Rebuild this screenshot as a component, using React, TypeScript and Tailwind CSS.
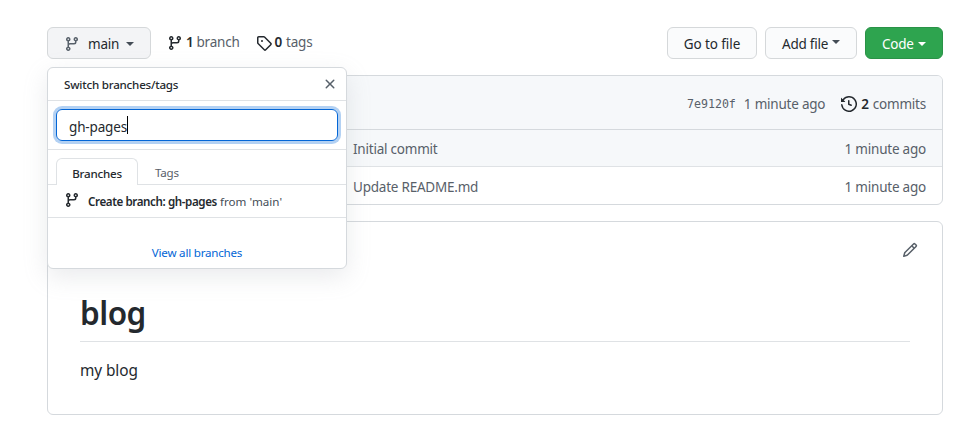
import type { ReactNode } from 'react';

const icons = {
  branch:
    'M11.75 2.5a.75.75 0 100 1.5.75.75 0 000-1.5zm-2.25.75a2.25 2.25 0 113 2.122V6A2.5 2.5 0 0110 8.5H6a1 1 0 00-1 1v1.128a2.251 2.251 0 11-1.5 0V5.372a2.25 2.25 0 111.5 0v1.836A2.492 2.492 0 016 7h4a1 1 0 001-1v-.628A2.25 2.25 0 019.5 3.25zM4.25 12a.75.75 0 100 1.5.75.75 0 000-1.5zM3.5 3.25a.75.75 0 111.5 0 .75.75 0 01-1.5 0z',
  tag: 'M2.5 7.775V2.75a.25.25 0 01.25-.25h5.025a.25.25 0 01.177.073l6.25 6.25a.25.25 0 010 .354l-5.025 5.025a.25.25 0 01-.354 0l-6.25-6.25a.25.25 0 01-.073-.177zm-1.5 0V2.75C1 1.784 1.784 1 2.75 1h5.025c.464 0 .91.184 1.238.513l6.25 6.25a1.75 1.75 0 010 2.474l-5.026 5.026a1.75 1.75 0 01-2.474 0l-6.25-6.25A1.75 1.75 0 011 7.775zM6 5a1 1 0 100 2 1 1 0 000-2z',
  history:
    'M1.643 3.143L.427 1.927A.25.25 0 000 2.104V5.75c0 .138.112.25.25.25h3.646a.25.25 0 00.177-.427L2.715 4.215a6.5 6.5 0 11-1.18 4.458.75.75 0 10-1.493.154 8.001 8.001 0 101.6-5.684zM7.75 4a.75.75 0 01.75.75v2.992l2.028.812a.75.75 0 01-.557 1.392l-2.5-1A.75.75 0 017 8.25v-3.5A.75.75 0 017.75 4z',
  x: 'M3.72 3.72a.75.75 0 011.06 0L8 6.94l3.22-3.22a.75.75 0 111.06 1.06L9.06 8l3.22 3.22a.75.75 0 11-1.06 1.06L8 9.06l-3.22 3.22a.75.75 0 01-1.06-1.06L6.94 8 3.72 4.78a.75.75 0 010-1.06z',
  pencil:
    'M11.013 1.427a1.75 1.75 0 012.474 0l1.086 1.086a1.75 1.75 0 010 2.474l-8.61 8.61c-.21.21-.47.364-.756.445l-3.251.93a.75.75 0 01-.927-.928l.929-3.25a1.75 1.75 0 01.445-.758l8.61-8.61zm1.414 1.06a.25.25 0 00-.354 0L10.811 3.75l1.439 1.44 1.263-1.263a.25.25 0 000-.354l-1.086-1.086zM11.189 6.25L9.75 4.81l-6.286 6.287a.25.25 0 00-.064.108l-.558 1.953 1.953-.558a.249.249 0 00.108-.064l6.286-6.286z',
};

function Icon({ name, className = '' }: { name: keyof typeof icons; className?: string }) {
  return (
    <svg viewBox="0 0 16 16" className={`size-4 shrink-0 fill-current ${className}`}>
      <path fillRule="evenodd" d={icons[name]} />
    </svg>
  );
}

function Caret({ className = '' }: { className?: string }) {
  return <span className={`h-0 w-0 border-x-4 border-t-4 border-x-transparent border-t-current ${className}`} />;
}

function Button({ className, children }: { className: string; children: ReactNode }) {
  return (
    <button className={`flex h-8 items-center rounded-md border pt-0.5 whitespace-nowrap ${className}`}>
      {children}
    </button>
  );
}

function Toolbar() {
  return (
    <div className="flex h-8 items-center">
      <div className="relative">
        <Button className="w-26 border-[#d5d8da] bg-[#f3f4f6] pl-4">
          <Icon name="branch" className="text-[#57606a]" />
          <span className="ml-2">main</span>
          <Caret className="ml-[7px] text-[#444d56]" />
        </Button>
        <BranchMenu />
      </div>
      <div className="ml-4 flex items-center text-[#586069]">
        <Icon name="branch" className="text-[#24292e]" />
        <b className="ml-[3px] pb-0.5 font-semibold text-[#24292e]">1</b>
        <span className="ml-[3px] pb-0.5">branch</span>
      </div>
      <div className="ml-4 flex items-center text-[#586069]">
        <Icon name="tag" className="text-[#24292e]" />
        <b className="ml-[3px] pb-0.5 font-semibold text-[#24292e]">0</b>
        <span className="ml-1 pb-0.5">tags</span>
      </div>
      <div className="ml-auto flex gap-2">
        <Button className="w-[90px] justify-center border-[#d5d8da] bg-[#fafbfc] tracking-[-0.1px]">Go to file</Button>
        <Button className="w-[92px] border-[#d5d8da] bg-[#fafbfc] pl-4">
          Add file
          <Caret className="mb-1 ml-1 text-[#444d56]" />
        </Button>
        <Button className="w-[78px] border-[#2a9247] bg-[#2ea44f] pl-4 text-white">
          Code
          <Caret className="ml-1" />
        </Button>
      </div>
    </div>
  );
}

function BranchMenu() {
  return (
    <div className="absolute top-10 left-0 z-10 flex h-[202px] w-[300px] flex-col rounded-md border border-[#d5d9dd] bg-white text-[11.6px] shadow-[0_8px_24px_rgba(149,157,165,0.2)]">
      <div className="flex h-[33px] items-center justify-between border-b border-[#dfe2e5] pr-2 pl-4">
        <span className="pt-0.5 font-medium">Switch branches/tags</span>
        <Icon name="x" className="text-[#57606a]" />
      </div>
      <div className="h-[49px] border-b border-[#dfe2e5] p-2">
        <div className="flex h-8 items-center rounded-md border border-[#0366d6] px-3 text-[13.5px] shadow-[0_0_0_3px_rgba(3,102,214,0.3)]">
          <span className="pt-[3px] tracking-[-0.15px]">gh-pages</span>
          <span className="h-[18px] w-px bg-black" />
        </div>
      </div>
      <div className="flex h-[35px] items-end border-b border-[#dfe2e5] pl-2">
        <div className="-mb-px flex h-[27px] w-[82px] items-center justify-center rounded-t-md border border-b-0 border-[#dfe2e5] bg-white pt-[3px] font-medium">
          Branches
        </div>
        <div className="flex h-[27px] items-center pt-1 pl-[17px] text-[#586069]">Tags</div>
      </div>
      <div className="flex h-[33px] items-center border-b border-[#dfe2e5] pl-4">
        <Icon name="branch" className="mb-[3px]" />
        <span className="ml-2 pt-0.5 font-semibold tracking-[-0.4px] whitespace-nowrap">Create branch: gh-pages</span>
        <span className="ml-[3px] pt-0.5 tracking-[0.05px] whitespace-nowrap text-[#444d56]">from 'main'</span>
      </div>
      <div className="flex flex-1 items-end justify-center pb-[7px] leading-4 text-[#0366d6]">View all branches</div>
    </div>
  );
}

function FileRow({ message, className }: { message: string; className: string }) {
  return (
    <div className={`flex items-center justify-between pt-0.5 pr-4 pl-[305px] text-[#586069] ${className}`}>
      <span>{message}</span>
      <span>1 minute ago</span>
    </div>
  );
}

export default function App() {
  return (
    <div className="h-[435px] w-[959px] bg-white pt-[27px] pr-4 pl-[47px] font-['Noto_Sans','Open_Sans',sans-serif] text-[13.5px] leading-5 tracking-[-0.22px] text-[#24292e]">
      <div className="w-[896px]">
        <Toolbar />
        <div className="mt-4 h-[130px] overflow-hidden rounded-md border border-[#d5d9dd]">
          <div className="flex h-[54px] items-center justify-end border-b border-[#d5d9dd] bg-[#f6f8fa] pt-0.5 pr-4 text-[#586069]">
            <span className="font-['DejaVu_Sans_Mono',monospace] text-[11.6px] tracking-normal">7e9120f</span>
            <span className="ml-2">1 minute ago</span>
            <Icon name="history" className="ml-4 text-[#24292e]" />
            <b className="ml-1 font-semibold text-[#24292e]">2</b>
            <span className="ml-1">commits</span>
          </div>
          <FileRow message="Initial commit" className="h-[37px] border-b border-[#dfe2e5] bg-[#f6f8fa]" />
          <FileRow message="Update README.md" className="h-[37px]" />
        </div>
        <div className="mt-4 flex h-[194px] flex-col rounded-md border border-[#d5d9dd] px-8">
          <div className="flex h-14 items-center justify-end">
            <Icon name="pencil" className="-mr-2 text-[#586069]" />
          </div>
          <h1 className="mt-[15px] h-[49px] border-b border-[#dfe2e5] text-[31.5px] leading-10 font-semibold tracking-[-0.5px]">
            blog
          </h1>
          <p className="mt-[17px] text-[15.4px] leading-6 tracking-[-0.1px]">my blog</p>
        </div>
      </div>
    </div>
  );
}
